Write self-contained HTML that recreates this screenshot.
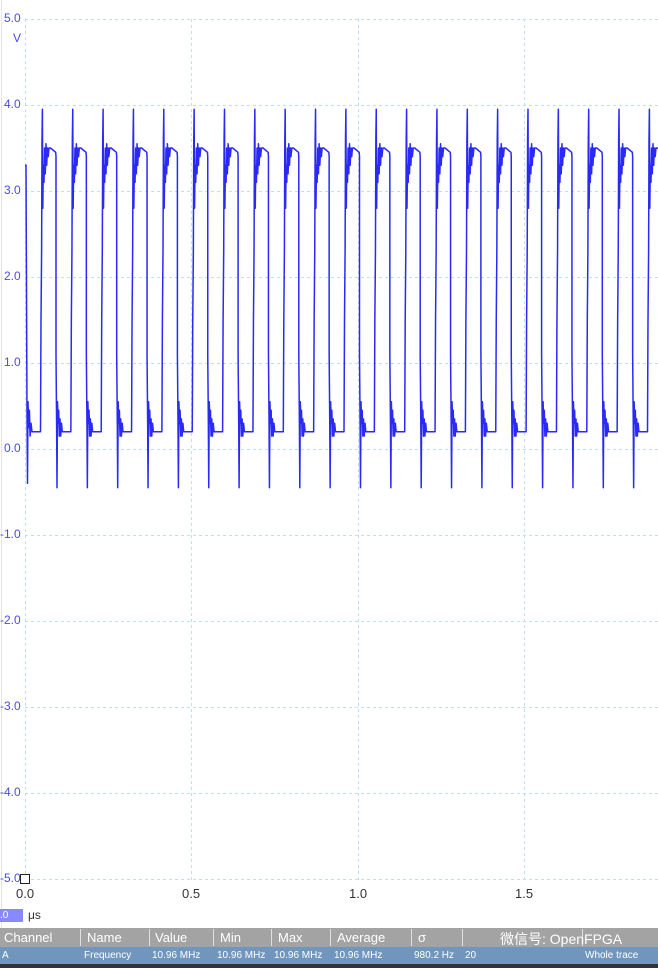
<!DOCTYPE html>
<html><head><meta charset="utf-8"><style>
html,body{margin:0;padding:0;background:#fff;width:658px;height:968px;overflow:hidden;font-family:"Liberation Sans","Noto Sans CJK SC",sans-serif}
.yl{position:absolute;left:4px;font-size:12px;color:#4a4ae8}
.xl{position:absolute;top:886px;font-size:13px;color:#333}
.hdr{position:absolute;top:928px;left:0;width:658px;height:19px;background:#a3a3a3}
.row{position:absolute;top:947px;left:0;width:658px;height:17px;background:#7096bd}
.c{position:absolute;color:#fff;white-space:nowrap}
.hdr .c{font-size:13px;top:2px}
.row .c{font-size:10px;top:3px}
.sep{position:absolute;top:1px;width:1px;height:17px;background:#e0e0e0}
</style></head><body>
<svg width="658" height="968" style="position:absolute;left:0;top:0" id="s">
<g stroke="#bfe0ec" stroke-width="1" stroke-dasharray="3,3" fill="none">
<line x1="25" y1="19.5" x2="658" y2="19.5"/><line x1="25" y1="105.5" x2="658" y2="105.5"/><line x1="25" y1="191.5" x2="658" y2="191.5"/><line x1="25" y1="277.5" x2="658" y2="277.5"/><line x1="25" y1="363.5" x2="658" y2="363.5"/><line x1="25" y1="449.5" x2="658" y2="449.5"/><line x1="25" y1="535.5" x2="658" y2="535.5"/><line x1="25" y1="621.5" x2="658" y2="621.5"/><line x1="25" y1="707.5" x2="658" y2="707.5"/><line x1="25" y1="793.5" x2="658" y2="793.5"/><line x1="25" y1="879.5" x2="658" y2="879.5"/>
<line x1="25.5" y1="19" x2="25.5" y2="880"/><line x1="191.5" y1="19" x2="191.5" y2="880"/><line x1="358.5" y1="19" x2="358.5" y2="880"/><line x1="524.5" y1="19" x2="524.5" y2="880"/>
</g>
<line x1="1.5" y1="0" x2="1.5" y2="928" stroke="#e4e4e4"/>
<path id="w" fill="none" stroke="#2a2af2" stroke-width="1.5" stroke-linejoin="round"/>
<rect x="20.5" y="874.5" width="9" height="9" fill="#fff" stroke="#222"/>
</svg>
<div class="yl" style="top:11px">5.0</div>
<div class="yl" style="top:31px;left:13px">V</div>
<div class="yl" style="top:97px">4.0</div>
<div class="yl" style="top:183px">3.0</div>
<div class="yl" style="top:269px">2.0</div>
<div class="yl" style="top:355px">1.0</div>
<div class="yl" style="top:441px">0.0</div>
<div class="yl" style="top:527px;left:0">-1.0</div>
<div class="yl" style="top:613px;left:0">-2.0</div>
<div class="yl" style="top:699px;left:0">-3.0</div>
<div class="yl" style="top:785px;left:0">-4.0</div>
<div class="yl" style="top:871px;left:0">-5.0</div>
<div class="xl" style="left:16px">0.0</div>
<div class="xl" style="left:182px">0.5</div>
<div class="xl" style="left:349px">1.0</div>
<div class="xl" style="left:515px">1.5</div>
<div style="position:absolute;left:0;top:909px;width:23px;height:13px;background:#8888ff;color:#fff;font-size:10px;line-height:13px">.0</div>
<div style="position:absolute;left:28px;top:908px;font-size:12px;color:#333">μs</div>
<div class="hdr">
<div class="c" style="left:4px">Channel</div><div class="sep" style="left:80px"></div>
<div class="c" style="left:87px">Name</div><div class="sep" style="left:149px"></div>
<div class="c" style="left:155px">Value</div><div class="sep" style="left:213px"></div>
<div class="c" style="left:220px">Min</div><div class="sep" style="left:271px"></div>
<div class="c" style="left:278px">Max</div><div class="sep" style="left:330px"></div>
<div class="c" style="left:337px">Average</div><div class="sep" style="left:411px"></div>
<div class="c" style="left:418px">σ</div><div class="sep" style="left:462px"></div>
<div class="sep" style="left:582px"></div>
<div class="c" style="left:500px;top:1px;font-size:14px;color:#fff">微信号: OpenFPGA</div>
</div>
<div class="row">
<div class="c" style="left:2px">A</div>
<div class="c" style="left:84px">Frequency</div>
<div class="c" style="left:152px">10.96 MHz</div>
<div class="c" style="left:217px">10.96 MHz</div>
<div class="c" style="left:274px">10.96 MHz</div>
<div class="c" style="left:334px">10.96 MHz</div>
<div class="c" style="left:414px">980.2 Hz</div>
<div class="c" style="left:465px">20</div>
<div class="c" style="left:585px">Whole trace</div>
</div>
<div style="position:absolute;top:964px;left:0;width:658px;height:4px;background:#333"></div>
<script>
var V=function(v){return 449-v*86;};
var d="M25 "+V(3.3)+" L26 "+V(3.3)+" L27 "+V(0.4)+" L27.5 "+V(-0.4)+" L28 "+V(0.55)+" L28.7 "+V(0.25)+" L29.4 "+V(0.45)+" L30.1 "+V(0.15)+" L31 "+V(0.3)+" L32 "+V(0.2)+" L35 "+V(0.2);
var P=30.35;
for(var k=0;k<21;k++){
 var r=41+k*P, f=56+k*P;
 d+=" L"+(r-0.5)+" "+V(0.2)+" L"+r+" "+V(1.5)+" L"+(r+0.6)+" "+V(2.3)+" L"+(r+1)+" "+V(3.6)+" L"+(r+1.4)+" "+V(3.95)+" L"+(r+1.8)+" "+V(2.8)+" L"+(r+2.3)+" "+V(3.3)+" L"+(r+3)+" "+V(3.1)+" L"+(r+3.6)+" "+V(3.5)+" L"+(r+4.3)+" "+V(3.2)+" L"+(r+5)+" "+V(3.55)+" L"+(r+5.7)+" "+V(3.3)+" L"+(r+6.4)+" "+V(3.5)+" L"+(r+7.2)+" "+V(3.4)+" L"+(r+8)+" "+V(3.5)+" L"+(r+9.5)+" "+V(3.5)+" L"+(f-0.3)+" "+V(3.45);
 if(f<658){
  d+=" L"+f+" "+V(3.4)+" L"+f+" "+V(1.1)+" L"+(f+0.6)+" "+V(0.3)+" L"+(f+1)+" "+V(-0.45)+" L"+(f+1.5)+" "+V(0.55)+" L"+(f+2.1)+" "+V(0.3)+" L"+(f+2.7)+" "+V(0.45)+" L"+(f+3.3)+" "+V(0.15)+" L"+(f+4)+" "+V(0.35)+" L"+(f+4.7)+" "+V(0.15)+" L"+(f+5.5)+" "+V(0.3)+" L"+(f+6.3)+" "+V(0.2)+" L"+(f+9)+" "+V(0.2);
 }
}
document.getElementById("w").setAttribute("d",d);
</script>
</body></html>
